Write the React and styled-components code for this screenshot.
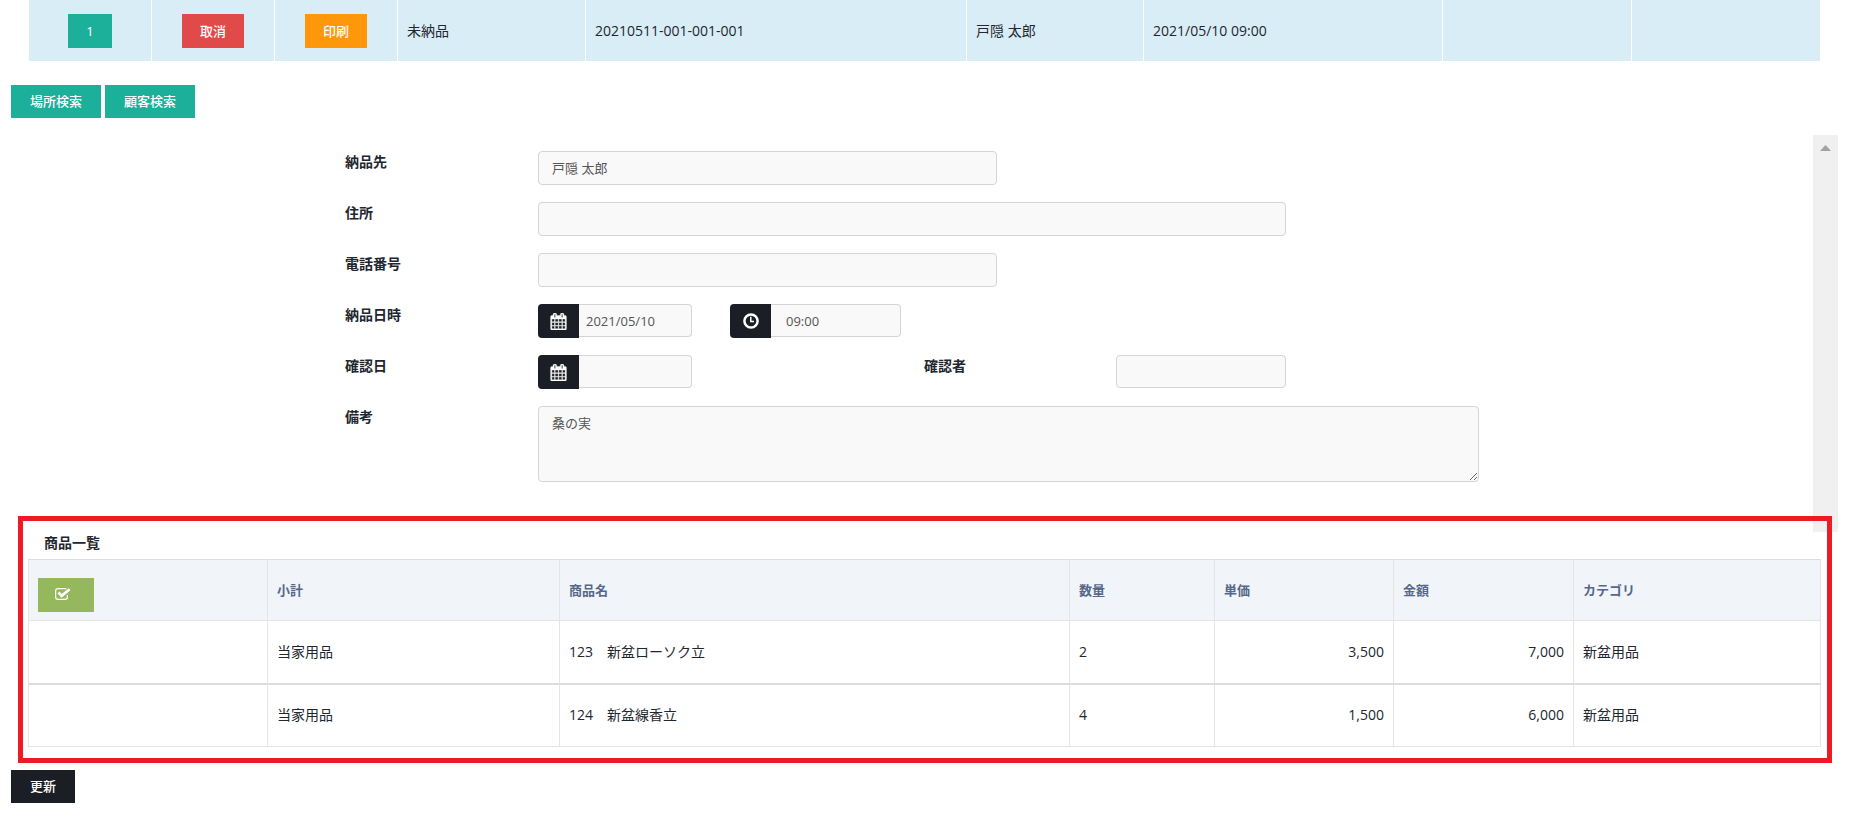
import styled, { createGlobalStyle } from 'styled-components';

const GlobalStyle = createGlobalStyle`
    * {
        box-sizing: border-box;
    }
    body {
        margin: 0;
        background: #fff;
        color: #22262e;
        font-family: "Open Sans", "Noto Sans CJK JP", sans-serif;
        font-size: 14px;
        line-height: 20px;
    }
    button, input, textarea {
        font-family: inherit;
    }
`;

const Page = styled.main`
    padding-bottom: 15px;
`;
const OrderTable = styled.table`
    width: calc(100% - 64px);
    margin: 0 35px 0 29px;
    table-layout: fixed;
    border-collapse: separate;
    border-spacing: 0;
`;
const OrderCell = styled.td`
    height: 61px;
    padding: 0 9px;
    text-align: ${({ $center }) => ($center ? 'center' : 'left')};
    background: #d9edf7;
    border-right: 1px solid #fff;
    &:last-child {
        border-right: 0;
    }
`;
const colors = {
    primary: '#1caf9a',
    danger: '#e04b4a',
    warning: '#fe970a',
    success: '#95b75d',
    dark: '#1b1e24',
};
const Button = styled.button`
    height: 33px;
    padding: 0 19px 2px;
    color: #fff;
    background: ${({ $color }) => colors[$color]};
    border: 0;
    font-size: 13px;
    font-weight: 500;
    line-height: 20px;
    vertical-align: middle;
    cursor: pointer;
`;
const RowButton = styled(Button)`
    height: 34px;
    padding: 0 18px;
`;
const CheckButton = styled(Button)`
    display: flex;
    align-items: center;
    width: 56px;
    height: 34px;
    margin-top: 9px;
    padding: 0 17px 2px;
`;
const SearchBar = styled.div`
    display: flex;
    gap: 4px;
    margin: 24px 11px 17px;
`;
const ScrollArea = styled.section`
    display: flex;
    margin: 0 17px -16px 11px;
`;
const Form = styled.form`
    flex: 1;
    display: grid;
    grid-template-columns: 334fr 193fr 192fr 194fr 73fr 119fr 170fr 193fr 334fr;
    grid-auto-rows: minmax(34px, auto);
    row-gap: 17px;
    padding: 16px 0 50px;
`;
const Label = styled.label`
    grid-column: ${({ $col }) => $col || 2};
    font-weight: 600;
    line-height: 22px;
`;
const Input = styled.input`
    grid-column: ${({ $col }) => $col};
    width: 100%;
    min-width: 0;
    height: ${({ $short }) => ($short ? '33px' : '34px')};
    padding: 0 13px 2px;
    color: #555;
    background: #f9f9f9;
    border: 1px solid #d5d5d5;
    border-radius: 4px;
    font-size: 13px;
`;
const Textarea = styled.textarea`
    grid-column: 3 / 9;
    display: block;
    width: 100%;
    height: 76px;
    padding: 6px 13px;
    color: #555;
    background: #f9f9f9;
    border: 1px solid #d5d5d5;
    border-radius: 4px;
    font-size: 13px;
    line-height: 20px;
`;
const InputGroup = styled.div`
    grid-column: ${({ $col }) => $col};
    display: flex;
    align-items: flex-start;
    width: ${({ $width }) => $width};
`;
const GroupInput = styled(Input)`
    padding: 0 ${({ $pad }) => $pad || '7px'};
    border-left: 0;
    border-radius: 0 4px 4px 0;
`;
const Addon = styled.span`
    flex: none;
    display: flex;
    align-items: center;
    justify-content: center;
    width: 41px;
    height: 34px;
    color: #fff;
    background: #1b1e24;
    border-radius: 4px 0 0 4px;
`;
const ScrollTrack = styled.div`
    flex: none;
    width: 25px;
    padding-top: 10px;
    background: #f0f0f0;
    text-align: center;
    line-height: 0;
`;
const ItemsPanel = styled.section`
    position: relative;
    margin: 0 23px 7px 18px;
    padding: 11px 6px 11px 5px;
    border: 5px solid #ed1c24;
`;
const ItemsTitle = styled.h2`
    margin: 0 16px 5px;
    font-size: 14px;
    font-weight: 600;
    line-height: 22px;
`;
const ItemsTable = styled.table`
    width: 100%;
    table-layout: fixed;
    border-collapse: collapse;
    tbody tr + tr {
        border-top: 2px solid #ddd;
    }
`;
const HeadCell = styled.th`
    height: 61px;
    padding: 0 9px;
    text-align: left;
    color: #56688a;
    background: #f1f5f9;
    border: 1px solid #e5e5e5;
    border-top-color: #ddd;
    font-size: 13px;
    font-weight: 600;
`;
const ItemCell = styled.td`
    height: 63px;
    padding: 0 9px;
    text-align: ${({ $right }) => ($right ? 'right' : 'left')};
    border-left: 1px solid #e5e5e5;
    border-right: 1px solid #e5e5e5;
    tr:last-child > & {
        border-bottom: 1px solid #e5e5e5;
    }
`;
const Footer = styled.div`
    margin: 0 11px;
`;

const CalendarIcon = () => (
    <svg width="17" height="17" viewBox="0 0 1792 1792" fill="currentColor" stroke="currentColor" strokeWidth="40" aria-hidden="true">
        <path d="M192 1664h288v-288h-288v288zm352 0h320v-288h-320v288zm-352-352h288v-320h-288v320zm352 0h320v-320h-320v320zm-352-384h288v-288h-288v288zm736 736h320v-288h-320v288zm-384-736h320v-288h-320v288zm768 736h288v-288h-288v288zm-384-352h320v-320h-320v320zm-352-864v-288q0-13-9.500-22.500t-22.500-9.500h-64q-13 0-22.500 9.500t-9.500 22.500v288q0 13 9.500 22.500t22.500 9.500h64q13 0 22.500-9.500t9.500-22.500zm736 864h288v-320h-288v320zm-384-384h320v-288h-320v288zm384 0h288v-288h-288v288zm32-480v-288q0-13-9.500-22.500t-22.500-9.500h-64q-13 0-22.500 9.500t-9.500 22.500v288q0 13 9.500 22.500t22.500 9.500h64q13 0 22.500-9.500t9.500-22.500zm384-64v1280q0 52-38 90t-90 38h-1408q-52 0-90-38t-38-90v-1280q0-52 38-90t90-38h128v-96q0-66 47-113t113-47h64q66 0 113 47t47 113v96h384v-96q0-66 47-113t113-47h64q66 0 113 47t47 113v96h128q52 0 90 38t38 90z" />
    </svg>
);
const ClockIcon = () => (
    <svg width="16" height="16" viewBox="0 0 16 16" fill="none" stroke="currentColor" aria-hidden="true">
        <circle cx="8" cy="8" r="6.600" strokeWidth="2.500" />
        <path d="M7.800 3.800V8.500H11" strokeWidth="1.500" />
    </svg>
);
const CheckIcon = () => (
    <svg width="16" height="12" viewBox="0 0 16 12" fill="none" stroke="currentColor" aria-hidden="true">
        <path d="M11.500 0.600H3Q0.600 0.600 0.600 3V9Q0.600 11.400 3 11.400H10Q12.400 11.400 12.400 9V7" strokeWidth="1.200" />
        <path d="M3.400 4.600L6.700 7.900L14.600 1.300" strokeWidth="2.800" />
    </svg>
);

const orderColumns = [123, 123, 123, 188, 381, 177, 299, 189, 188];
const itemColumns = [239, 292, 510, 145, 179, 180, 247];

const items = [
    { type: '当家用品', name: '123　新盆ローソク立', count: '2', price: '3,500', total: '7,000', category: '新盆用品' },
    { type: '当家用品', name: '124　新盆線香立', count: '4', price: '1,500', total: '6,000', category: '新盆用品' },
];

const Columns = ({ widths }) => {
    const sum = widths.reduce((a, b) => a + b, 0);
    return (
        <colgroup>
            {widths.map((w, i) => <col key={i} style={{ width: `${(w / sum) * 100}%` }} />)}
        </colgroup>
    );
};

const App = () => {
    return (
        <Page>
            <GlobalStyle />
            <OrderTable>
                <Columns widths={orderColumns} />
                <tbody>
                    <tr>
                        <OrderCell $center><RowButton $color="primary">1</RowButton></OrderCell>
                        <OrderCell $center><RowButton $color="danger">取消</RowButton></OrderCell>
                        <OrderCell $center><RowButton $color="warning">印刷</RowButton></OrderCell>
                        <OrderCell>未納品</OrderCell>
                        <OrderCell>20210511-001-001-001</OrderCell>
                        <OrderCell>戸隠 太郎</OrderCell>
                        <OrderCell>2021/05/10 09:00</OrderCell>
                        <OrderCell />
                        <OrderCell />
                    </tr>
                </tbody>
            </OrderTable>
            <SearchBar>
                <Button $color="primary">場所検索</Button>
                <Button $color="primary">顧客検索</Button>
            </SearchBar>
            <ScrollArea>
                <Form onSubmit={(e) => e.preventDefault()}>
                    <Label htmlFor="dest">納品先</Label>
                    <Input id="dest" $col="3 / 6" defaultValue="戸隠 太郎" />
                    <Label htmlFor="address">住所</Label>
                    <Input id="address" $col="3 / 8" />
                    <Label htmlFor="tel">電話番号</Label>
                    <Input id="tel" $col="3 / 6" />
                    <Label htmlFor="date">納品日時</Label>
                    <InputGroup $col="3" $width="80%">
                        <Addon><CalendarIcon /></Addon>
                        <GroupInput id="date" $short defaultValue="2021/05/10" />
                    </InputGroup>
                    <InputGroup $col="4" $width="88%">
                        <Addon><ClockIcon /></Addon>
                        <GroupInput $short $pad="15px" aria-label="納品時刻" defaultValue="09:00" />
                    </InputGroup>
                    <Label htmlFor="confirmDate">確認日</Label>
                    <InputGroup $col="3" $width="80%">
                        <Addon><CalendarIcon /></Addon>
                        <GroupInput id="confirmDate" $short />
                    </InputGroup>
                    <Label $col="5 / 7" htmlFor="confirmer">確認者</Label>
                    <Input id="confirmer" $col="7" $short />
                    <Label htmlFor="note">備考</Label>
                    <Textarea id="note" defaultValue="桑の実" />
                </Form>
                <ScrollTrack>
                    <svg width="11" height="6" viewBox="0 0 11 6" aria-hidden="true">
                        <path d="M5.500 0L11 6H0z" fill="#a3a3a3" />
                    </svg>
                </ScrollTrack>
            </ScrollArea>
            <ItemsPanel>
                <ItemsTitle>商品一覧</ItemsTitle>
                <ItemsTable>
                    <Columns widths={itemColumns} />
                    <thead>
                        <tr>
                            <HeadCell>
                                <CheckButton $color="success" aria-label="選択"><CheckIcon /></CheckButton>
                            </HeadCell>
                            <HeadCell>小計</HeadCell>
                            <HeadCell>商品名</HeadCell>
                            <HeadCell>数量</HeadCell>
                            <HeadCell>単価</HeadCell>
                            <HeadCell>金額</HeadCell>
                            <HeadCell>カテゴリ</HeadCell>
                        </tr>
                    </thead>
                    <tbody>
                        {items.map((item) => (
                            <tr key={item.name}>
                                <ItemCell />
                                <ItemCell>{item.type}</ItemCell>
                                <ItemCell>{item.name}</ItemCell>
                                <ItemCell>{item.count}</ItemCell>
                                <ItemCell $right>{item.price}</ItemCell>
                                <ItemCell $right>{item.total}</ItemCell>
                                <ItemCell>{item.category}</ItemCell>
                            </tr>
                        ))}
                    </tbody>
                </ItemsTable>
            </ItemsPanel>
            <Footer>
                <Button $color="dark">更新</Button>
            </Footer>
        </Page>
    );
};

export default App;
